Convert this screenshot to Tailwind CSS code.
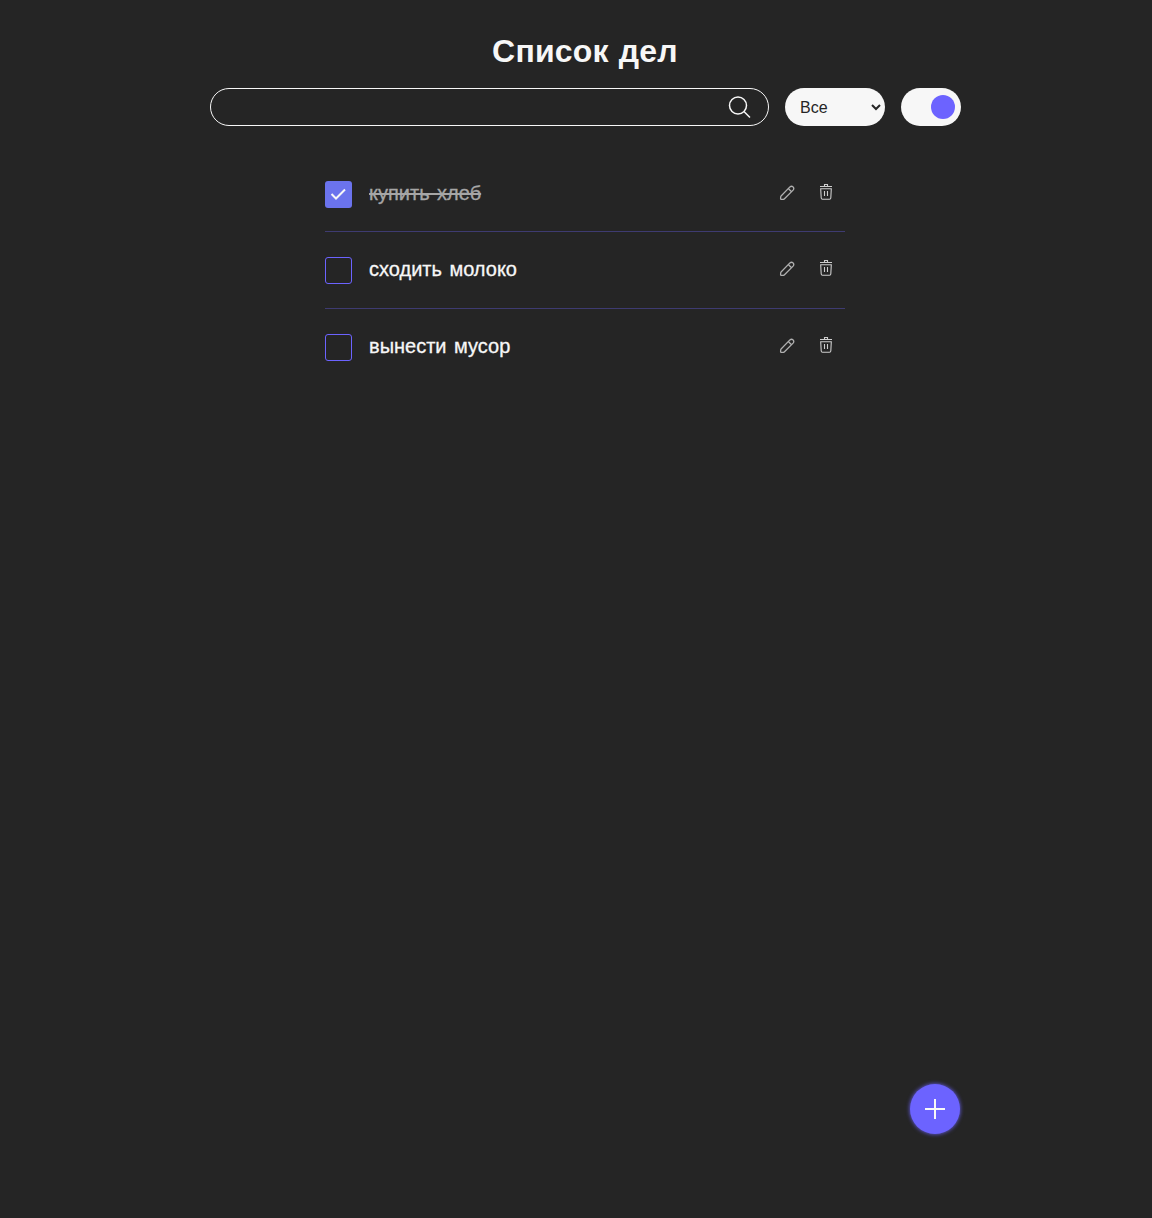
<!DOCTYPE html>
<html lang="ru">
<head>
<meta charset="utf-8">
<title>Список дел</title>
<script src="https://cdn.jsdelivr.net/npm/@tailwindcss/browser@4"></script>
</head>
<body class="h-[1218px] overflow-hidden bg-[#252525] text-[#f7f7f7] font-['Liberation_Sans',Arial,sans-serif]">
<svg class="hidden">
  <symbol id="pencil" viewBox="0 0 16 16"><path d="M2.2 15.4Q1.5 15.3 1.6 14.5L1.7 12.8Q1.8 12.2 2.3 11.7L10.9 2.9Q12.5 1.5 14.1 2.9 15.5 4.5 14.1 6.1L5.5 14.8Q5 15.3 4.4 15.4ZM9.3 4.5 12.5 7.7" fill="none" stroke="currentColor" stroke-width="1.3" stroke-linejoin="round"/></symbol>
  <symbol id="trash" viewBox="0 0 14 16"><path d="M1 2.5H13M5.5 2.5V.5H8.5V2.5M1.7 4.7H12.3L11.8 14Q11.7 15.2 10.5 15.2H3.5Q2.3 15.2 2.2 14ZM5.5 7V12M8.5 7V12" fill="none" stroke="currentColor" stroke-width="1.1"/></symbol>
</svg>
<main class="ml-[210px] flex h-full w-[751px] flex-col pt-8 pb-[84px]">
  <h1 class="h-[38px] w-[750px] text-center text-[32px] leading-[38px] font-bold tracking-[0.2px] [word-spacing:1px]">Список дел</h1>
  <div class="mt-[18px] flex h-[38px] gap-4">
    <div class="flex w-[559px] items-center justify-end rounded-full border border-[#f7f7f7] pr-[17px]">
      <svg class="size-[23px]" viewBox="0 0 23 23" fill="none" stroke="currentColor" stroke-width="1.5"><circle cx="10" cy="9.5" r="8.5"/><path d="m16 15.5 6 6"/></svg>
    </div>
    <div class="flex w-[100px] items-center justify-between rounded-full bg-[#f7f7f7] pr-1 pl-[15px] text-[#252525]">
      <span class="pt-px text-base">Все</span>
      <svg class="h-[7px] w-[10px]" viewBox="0 0 10 7" fill="none" stroke="currentColor" stroke-width="2"><path d="m1 1 4 4 4-4"/></svg>
    </div>
    <div class="flex w-[60px] items-center justify-end rounded-full bg-[#f7f7f7] pr-1.5"><span class="size-6 rounded-full bg-[#6c63ff]"></span></div>
  </div>
  <ul class="mt-[30px] ml-[115px] w-[520px] text-xl font-medium [word-spacing:2px] [-webkit-text-stroke:0.3px_currentColor]">
    <li class="flex h-[76px] items-start border-b border-[#6c63ff]/35 pt-[25px] pr-3">
      <span class="flex size-[27px] items-center justify-center rounded-[3px] bg-[#6b73ed]"><svg class="mr-px mb-px h-[12px] w-[16px]" viewBox="0 0 16 12" fill="none" stroke="#f7f7f7" stroke-width="2"><path d="m1.5 6 4.5 4.5L15 1.5"/></svg></span>
      <span class="ml-[17px] leading-[24px] text-[#a6a6a6] line-through decoration-2">купить хлеб</span>
      <svg class="mt-[3px] ml-auto size-4 text-[#b0b0b0]"><use href="#pencil"/></svg>
      <svg class="mt-[3px] ml-6 h-4 w-3.5 text-[#cdcdcd]"><use href="#trash"/></svg>
    </li>
    <li class="flex h-[77px] items-start border-b border-[#6c63ff]/35 pt-[25px] pr-3">
      <span class="size-[27px] rounded-[3px] border border-[#6c63ff]"></span>
      <span class="ml-[17px] leading-[24px]">сходить молоко</span>
      <svg class="mt-[3px] ml-auto size-4 text-[#b0b0b0]"><use href="#pencil"/></svg>
      <svg class="mt-[3px] ml-6 h-4 w-3.5 text-[#cdcdcd]"><use href="#trash"/></svg>
    </li>
    <li class="flex h-[77px] items-start pt-[25px] pr-3">
      <span class="size-[27px] rounded-[3px] border border-[#6c63ff]"></span>
      <span class="ml-[17px] leading-[24px]">вынести мусор</span>
      <svg class="mt-[3px] ml-auto size-4 text-[#b0b0b0]"><use href="#pencil"/></svg>
      <svg class="mt-[3px] ml-6 h-4 w-3.5 text-[#cdcdcd]"><use href="#trash"/></svg>
    </li>
  </ul>
  <button class="mt-auto mr-px flex size-[50px] items-center justify-center self-end rounded-full bg-[#6c63ff] shadow-[0_0_4px_#6c63ff]">
    <svg class="size-5" viewBox="0 0 20 20" stroke="#f7f7f7" stroke-width="2"><path d="M0 10H20M10 0V20"/></svg>
  </button>
</main>
</body>
</html>
